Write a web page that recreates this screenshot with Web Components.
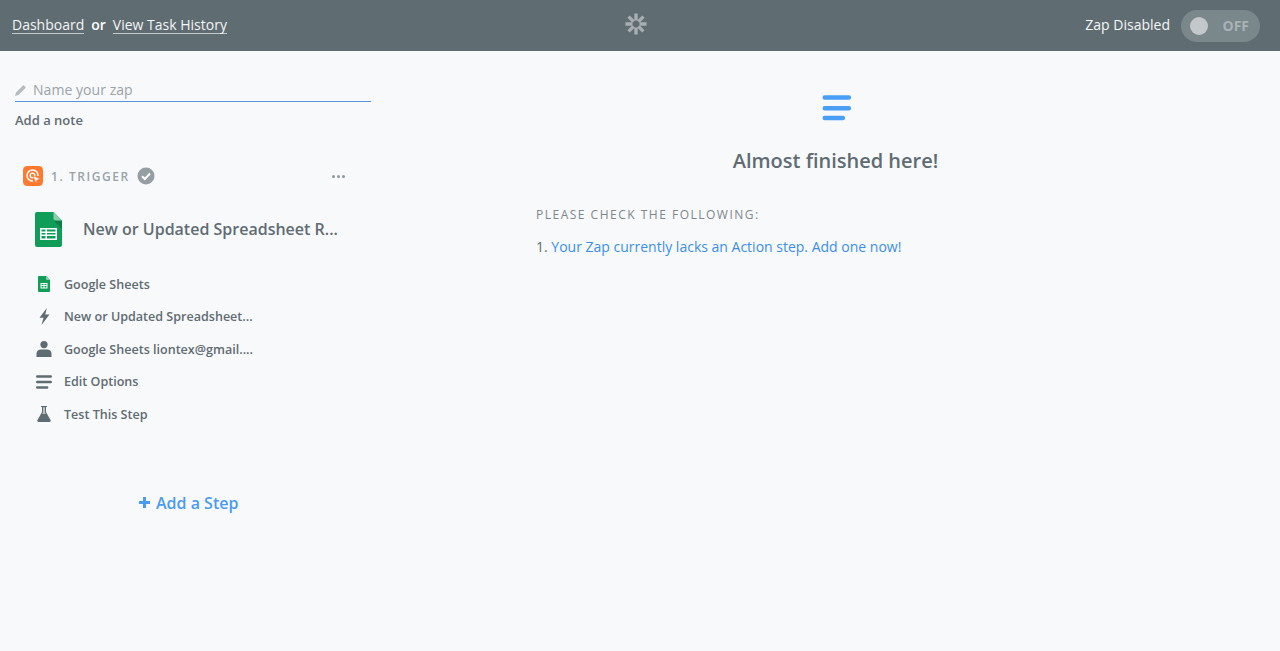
<!DOCTYPE html>
<html><head><meta charset="utf-8">
<style>
html,body{margin:0;padding:0;height:100%;}
body{background:#f8f9fb;font-family:"Open Sans",sans-serif;color:#5f6c72;overflow:hidden;}
</style></head>
<body>
<zap-app></zap-app>
<template id="t-app">
<style>
:host{display:flex;flex-direction:column;height:651px;}
.main{display:grid;grid-template-columns:371px 1fr;flex:1;min-height:0;}
</style>
<zap-header></zap-header>
<div class="main"><zap-sidebar></zap-sidebar><zap-panel></zap-panel></div>
</template>
<template id="t-header">
<style>
:host{display:grid;grid-template-columns:1fr auto 1fr;align-items:center;height:51px;background:#5f6c72;color:#fff;font-size:14px;padding:0 20px 0 12px;box-sizing:border-box;}
.l{display:flex;align-items:center;gap:7px;white-space:nowrap;margin-top:-2px;}
a{color:#f4f5f6;text-decoration:none;border-bottom:1px solid #c4c9cc;line-height:17px;}
b{font-weight:600;}
.r{display:flex;justify-content:flex-end;align-items:center;gap:11px;color:#f6f7f7;}
.r>span{margin-top:-2px;}
.t{width:79px;height:32px;border-radius:16px;background:#7a878b;display:flex;align-items:center;justify-content:space-between;box-sizing:border-box;padding:0 11px 0 9px;font-weight:700;font-size:14px;color:#a9b2b5;}
.k{width:18px;height:18px;border-radius:50%;background:#c3c8ca;}
svg{display:block;margin-left:-1px;margin-top:-3px;}
</style>
<div class="l"><a>Dashboard</a><b>or</b><a>View Task History</a></div>
<svg width="22" height="22" viewBox="0 0 22 22" fill="none" stroke="#a7afb3" stroke-width="3.400"><path d="M11 .5v7M11 14.500v7M.5 11h7M14.500 11h7M3.600 3.600l5 5M13.400 13.400l5 5M18.400 3.600l-5 5M8.600 13.400l-5 5"/></svg>
<div class="r"><span>Zap Disabled</span><div class="t"><span class="k"></span><span>OFF</span></div></div>
</template>
<template id="t-sidebar">
<style>
:host{display:block;padding:29px 0 0 15px;box-sizing:border-box;}
.name{display:flex;align-items:flex-start;gap:6px;height:21px;border-bottom:1px solid #5b93d8;color:#9aa3a7;font-size:14px;line-height:19px;letter-spacing:.05px;}
.name svg{margin-top:4px;}
.note{font-size:13px;font-weight:600;margin-top:9px;line-height:18px;color:#5f6c72;}
.card{margin:36px 0 0 8px;width:322px;}
.head{display:flex;align-items:center;height:22px;}
.badge{width:20px;height:20px;border-radius:4px;display:block;}
.lab{margin-left:8px;font-size:12px;font-weight:600;letter-spacing:1.550px;color:#9aa3a7;}
.ck{margin-left:7px;display:block;}
.dots{margin-left:auto;display:flex;gap:2px;}
.dots i{width:3px;height:3px;background:#8d979b;border-radius:50%;}
.title{display:flex;align-items:center;margin:23px 0 0 12px;height:38px;gap:21px;font-size:16px;font-weight:600;white-space:nowrap;}
.items{margin-top:20px;display:flex;flex-direction:column;}
.step{margin:60px 0 0 116px;display:flex;align-items:center;gap:6px;color:#4a9bf0;font-size:16px;font-weight:600;height:24px;}
</style>
<div class="name"><svg width="12" height="12" viewBox="0 0 12 12"><path d="M0 12l1-3.500L8.500 1l2.500 2.500L3.500 11z" fill="#b6bcbf"/></svg><span>Name your zap</span></div>
<div class="note">Add a note</div>
<div class="card">
<div class="head">
<svg class="badge" viewBox="0 0 20 20"><rect width="20" height="20" rx="4" fill="#ff7a2f"/><path d="M15 10a5.500 5.500 0 1 0-5 5" fill="none" stroke="#fff" stroke-width="1.500"/><circle cx="9.500" cy="9.500" r="2.300" fill="none" stroke="#fff" stroke-width="1.300"/><path d="M9.800 9.800l7.400 3-3 1.200-1.200 3.200z" fill="#fff" stroke="#ff7a2f" stroke-width=".7"/></svg>
<span class="lab">1. TRIGGER</span>
<svg class="ck" width="18" height="18" viewBox="0 0 18 18"><circle cx="9" cy="9" r="8.500" fill="#959ea2"/><path d="M5 9.200l2.800 2.800L13 6.500" fill="none" stroke="#fff" stroke-width="2"/></svg>
<span class="dots"><i></i><i></i><i></i></span>
</div>
<div class="title">
<svg width="27" height="35" viewBox="0 0 27 35"><path d="M2 0h16.500L27 8.500V33a2 2 0 0 1-2 2H2a2 2 0 0 1-2-2V2a2 2 0 0 1 2-2z" fill="#0f9d58"/><path d="M18.500 8.500L27 17V8.500z" fill="#0b7f46"/><path d="M18.500 0L27 8.500h-6.500a2 2 0 0 1-2-2z" fill="#87cEac"/><path d="M5 16h17v12H5zM6.500 17.500v2h4v-2zM12 17.500v2h8.500v-2zM6.500 21v1.500h4V21zM12 21v1.500h8.500V21zM6.500 24v2.500h4V24zM12 24v2.500h8.500V24z" fill="#fff" fill-rule="evenodd"/></svg>
<span>New or Updated Spreadsheet R...</span>
</div>
<div class="items">
<step-item label="Google Sheets"><svg width="12" height="16" viewBox="0 0 12 16"><path d="M1 0h7l4 4v11a1 1 0 0 1-1 1H1a1 1 0 0 1-1-1V1a1 1 0 0 1 1-1z" fill="#0f9d58"/><path d="M8 0l4 4H9a1 1 0 0 1-1-1z" fill="#87ceac"/><path d="M2.500 7h7v5.500h-7zM3.500 8v1h2V8zM6.500 8v1h2V8zM3.500 10v1.500h2V10zM6.500 10v1.500h2V10z" fill="#fff" fill-rule="evenodd"/></svg></step-item>
<step-item label="New or Updated Spreadsheet..."><svg width="11" height="17" viewBox="0 0 11 17"><path d="M7.800 0L.5 9.700h4L2.500 17l8-10.500H6.300z" fill="#5f6c72"/></svg></step-item>
<step-item label="Google Sheets liontex@gmail...."><svg width="16" height="16" viewBox="0 0 16 16"><circle cx="8" cy="3.600" r="3.600" fill="#5f6c72"/><path d="M.5 16v-3.500C.5 10 2.500 8.500 5 8.500h6c2.500 0 4.500 1.500 4.500 4V16z" fill="#5f6c72"/></svg></step-item>
<step-item label="Edit Options"><svg width="16" height="14" viewBox="0 0 16 14" fill="none" stroke="#5f6c72" stroke-width="2.400" stroke-linecap="round"><path d="M1.200 1.500h13.600M1.200 7h13.600M1.200 12.500h10"/></svg></step-item>
<step-item label="Test This Step"><svg width="14" height="16" viewBox="0 0 14 16"><path d="M4 0h6v1H9v5l4.500 8a1.300 1.300 0 0 1-1 2h-11a1.300 1.300 0 0 1-1-2L5 6V1H4z" fill="#5f6c72"/><path d="M6 1.200h2v5l.8 1.800H5.200L6 6.200z" fill="#f8f9fb" opacity=".6"/></svg></step-item>
</div>
<div class="step"><svg width="11" height="11" viewBox="0 0 11 11"><path d="M4 0h3v4h4v3H7v4H4V7H0V4h4z" fill="#4a9bf0"/></svg><span>Add a Step</span></div>
</div>
</template>
<template id="t-item">
<style>
:host{display:flex;align-items:center;height:32.500px;font-size:12.560px;font-weight:600;white-space:nowrap;color:#5f6c72;}
.i{width:16px;display:flex;justify-content:center;margin:0 12px 0 13px;}
</style>
<span class="i"><slot></slot></span><span id="x"></span>
</template>
<template id="t-panel">
<style>
:host{display:flex;flex-direction:column;box-sizing:border-box;padding:43px 0 0 165px;}
.c{width:600px;display:flex;flex-direction:column;align-items:center;}
h2{margin:26px 0 0;font-size:20px;font-weight:600;line-height:28px;color:#5f6c72;position:relative;left:-.5px;}
.p{margin:31px 0 0;font-size:12px;letter-spacing:1.500px;color:#7d878c;line-height:17px;}
.l{margin:14px 0 0;font-size:14px;line-height:20px;color:#5f6c72;}
a{color:#3b8fea;text-decoration:none;}
svg{display:block;margin-left:1px;}
</style>
<div class="c">
<svg width="30" height="27" viewBox="0 0 30 27" fill="none" stroke="#4a9ff5" stroke-width="4.600" stroke-linecap="round"><path d="M2.800 3.500h24M2.800 14.200h24M2.800 24h18"/></svg>
<h2>Almost finished here!</h2>
</div>
<div class="p">PLEASE CHECK THE FOLLOWING:</div>
<div class="l">1. <a>Your Zap currently lacks an Action step. Add one now!</a></div>
</template>
<script>
function def(n,t,f){customElements.define(n,class extends HTMLElement{constructor(){super();this.attachShadow({mode:"open"}).appendChild(document.getElementById(t).content.cloneNode(true));}connectedCallback(){if(f)f(this);}});}
def("zap-header","t-header");
def("step-item","t-item",e=>{e.shadowRoot.getElementById("x").textContent=e.getAttribute("label");});
def("zap-sidebar","t-sidebar");
def("zap-panel","t-panel");
def("zap-app","t-app");
</script>
</body></html>
